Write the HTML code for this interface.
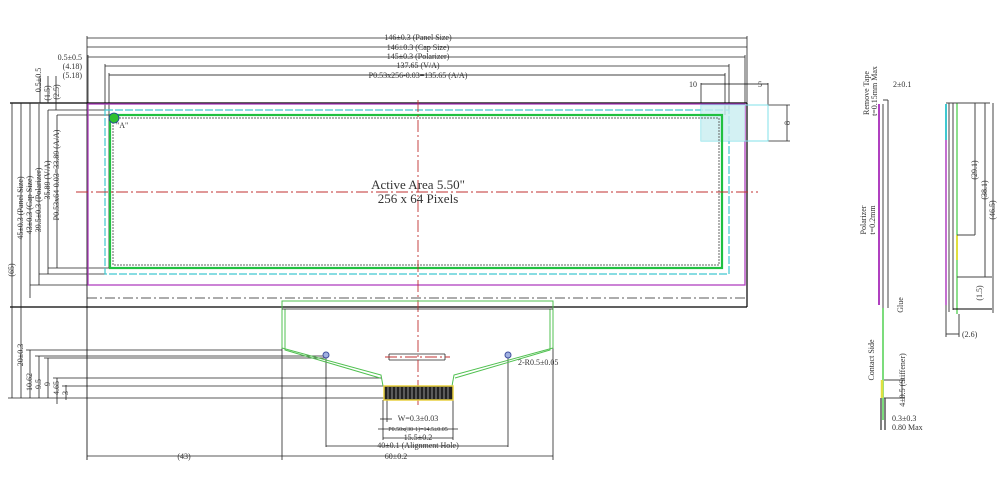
<!DOCTYPE html>
<html><head><meta charset="utf-8"><style>
html,body{margin:0;padding:0;background:#fff;}
svg{display:block;font-family:"Liberation Serif",serif;}
</style></head><body>
<svg width="1000" height="487" viewBox="0 0 1000 487" xmlns="http://www.w3.org/2000/svg">
<rect width="1000" height="487" fill="#fff"/>
<g stroke="#222" stroke-width="0.8" fill="none">
<!-- top dims -->
<line x1="87" y1="38" x2="747" y2="38"/>
<line x1="87" y1="47" x2="747" y2="47"/>
<line x1="88" y1="57" x2="745" y2="57"/>
<line x1="105" y1="66" x2="729" y2="66"/>
<line x1="109" y1="75" x2="725" y2="75" stroke="#000"/>
<line x1="87" y1="36" x2="87" y2="103"/>
<line x1="88" y1="55" x2="88" y2="103"/>
<line x1="105" y1="64" x2="105" y2="110"/>
<line x1="109" y1="73" x2="109" y2="268"/>
<line x1="747" y1="36" x2="747" y2="103"/>
<line x1="745" y1="55" x2="745" y2="103"/>
<line x1="729" y1="64" x2="729" y2="110"/>
<line x1="725" y1="73" x2="725" y2="115"/>
<line x1="701" y1="83" x2="701" y2="112"/>
<line x1="768" y1="83" x2="768" y2="110"/>
<line x1="701" y1="84" x2="768" y2="84" stroke="#000"/>
<line x1="768" y1="105" x2="790" y2="105"/>
<line x1="768" y1="141" x2="790" y2="141"/>
<line x1="787" y1="105" x2="787" y2="141"/>
<!-- panel -->
<line x1="10" y1="103" x2="747" y2="103" stroke="#000" stroke-width="1.2"/>
<line x1="10" y1="307" x2="747" y2="307" stroke="#000" stroke-width="1.2"/>
<line x1="87" y1="103" x2="87" y2="460" stroke="#000"/>
<line x1="747" y1="103" x2="747" y2="307" stroke="#000" stroke-width="1.2"/>
<line x1="87" y1="298" x2="747" y2="298" stroke-dasharray="10,3,2,3"/>
<!-- left dims -->
<line x1="12" y1="103" x2="12" y2="398"/>
<line x1="21" y1="103" x2="21" y2="307"/>
<line x1="30" y1="103" x2="30" y2="298"/>
<line x1="39" y1="104" x2="39" y2="285"/>
<line x1="48" y1="110" x2="48" y2="274"/>
<line x1="57" y1="115" x2="57" y2="268"/>
<line x1="30" y1="285" x2="88" y2="285"/>
<line x1="39" y1="274" x2="105" y2="274"/>
<line x1="48" y1="268" x2="109" y2="268"/>
<line x1="48" y1="110" x2="105" y2="110"/>
<line x1="57" y1="115" x2="110" y2="115"/>
<line x1="40" y1="76" x2="40" y2="103"/>
<line x1="48" y1="76" x2="48" y2="103"/>
<line x1="56" y1="76" x2="56" y2="110"/>
<line x1="21" y1="307" x2="21" y2="398"/>
<line x1="30" y1="350" x2="30" y2="398"/>
<line x1="39" y1="356" x2="39" y2="398"/>
<line x1="48" y1="358" x2="48" y2="398"/>
<line x1="57" y1="378" x2="57" y2="404"/>
<line x1="66" y1="385" x2="66" y2="400"/>
<line x1="8" y1="398" x2="384" y2="398"/>
<line x1="26" y1="350" x2="282" y2="350"/>
<line x1="35" y1="356" x2="326" y2="356"/>
<line x1="44" y1="358" x2="326" y2="358"/>
<line x1="53" y1="378" x2="382" y2="378"/>
<line x1="62" y1="386" x2="384" y2="386"/>
<!-- bottom dims -->
<line x1="282" y1="310" x2="282" y2="460"/>
<line x1="553" y1="310" x2="553" y2="460"/>
<line x1="87" y1="456" x2="553" y2="456"/>
<line x1="326" y1="358" x2="326" y2="447"/>
<line x1="508" y1="358" x2="508" y2="447"/>
<line x1="326" y1="446" x2="508" y2="446"/>
<line x1="383" y1="400" x2="383" y2="440"/>
<line x1="453" y1="400" x2="453" y2="440"/>
<line x1="383" y1="438" x2="453" y2="438"/>
<line x1="378" y1="429" x2="458" y2="429"/>
<line x1="380" y1="419" x2="392" y2="419"/>
<line x1="387" y1="400" x2="387" y2="422"/>
<line x1="389" y1="354" x2="445" y2="354"/>
<line x1="389" y1="360" x2="445" y2="360"/>
<line x1="389" y1="354" x2="389" y2="360"/>
<line x1="445" y1="354" x2="445" y2="360"/>
</g>
<!-- magenta -->
<rect x="88" y="104" width="657" height="181" fill="none" stroke="#b040c0" stroke-width="1.3"/>
<!-- cyan -->
<rect x="105" y="110" width="624" height="164" fill="none" stroke="#40c8d0" stroke-width="1.2" stroke-dasharray="8,2"/>
<rect x="701" y="105" width="67" height="36" fill="none" stroke="#80e0e8" stroke-width="1"/>
<rect x="701" y="105" width="44" height="36" fill="#c8eef0" opacity="0.8"/>
<!-- green -->
<rect x="110" y="115" width="612" height="153" fill="none" stroke="#20c040" stroke-width="2.2"/>
<rect x="113" y="118" width="606" height="147" fill="none" stroke="#666" stroke-width="1" stroke-dasharray="2,1"/>
<circle cx="114" cy="118" r="5" fill="#30c030" stroke="#2040a0" stroke-width="0.8"/>
<!-- red center -->
<g stroke="#c03030" stroke-width="0.9" stroke-dasharray="12,3,2,3">
<line x1="76" y1="192" x2="758" y2="192"/>
<line x1="418" y1="100" x2="418" y2="405"/>
<line x1="385" y1="357" x2="450" y2="357"/>
</g>
<!-- FPC -->
<g fill="none" stroke="#50c050" stroke-width="1">
<polyline points="282,309 282,301 553,301 553,309"/>
<polyline points="282,309 282,348 381,375 383,386"/>
<polyline points="553,309 553,348 454,375 452,386"/>
<polyline points="285,309 285,350 380,378"/>
<polyline points="550,309 550,350 455,378"/>
</g>
<line x1="282" y1="309" x2="553" y2="309" stroke="#222" stroke-width="0.8"/>
<rect x="384" y="386" width="69" height="14" fill="#222" stroke="#e8d040" stroke-width="1.5"/>
<g stroke="#ddd" stroke-width="0.6">
<line x1="388" y1="387" x2="388" y2="399"/><line x1="392" y1="387" x2="392" y2="399"/><line x1="396" y1="387" x2="396" y2="399"/><line x1="400" y1="387" x2="400" y2="399"/><line x1="404" y1="387" x2="404" y2="399"/><line x1="408" y1="387" x2="408" y2="399"/><line x1="412" y1="387" x2="412" y2="399"/><line x1="416" y1="387" x2="416" y2="399"/><line x1="420" y1="387" x2="420" y2="399"/><line x1="424" y1="387" x2="424" y2="399"/><line x1="428" y1="387" x2="428" y2="399"/><line x1="432" y1="387" x2="432" y2="399"/><line x1="436" y1="387" x2="436" y2="399"/><line x1="440" y1="387" x2="440" y2="399"/><line x1="444" y1="387" x2="444" y2="399"/><line x1="448" y1="387" x2="448" y2="399"/>
</g>
<circle cx="326" cy="355" r="3" fill="#a0b0e0" stroke="#4050a0"/>
<circle cx="508" cy="355" r="3" fill="#a0b0e0" stroke="#4050a0"/>
<!-- side view 1 -->
<g fill="none" stroke-width="1">
<line x1="879" y1="104" x2="879" y2="305" stroke="#b040c0" stroke-width="2"/>
<line x1="883" y1="104" x2="883" y2="308" stroke="#444"/>
<line x1="888" y1="100" x2="888" y2="308" stroke="#444"/>
<line x1="883" y1="100" x2="888" y2="100" stroke="#444"/>
<line x1="883" y1="308" x2="883" y2="420" stroke="#50d050" stroke-width="1.5"/>
<line x1="882" y1="380" x2="882" y2="398" stroke="#e0e040" stroke-width="2.5"/>
<line x1="881" y1="398" x2="881" y2="430" stroke="#000"/>
<line x1="885" y1="398" x2="885" y2="430" stroke="#000"/>
<line x1="884" y1="380" x2="905" y2="380" stroke="#444"/>
<line x1="884" y1="398" x2="905" y2="398" stroke="#444"/>
<line x1="902" y1="380" x2="902" y2="398" stroke="#444"/>
</g>
<!-- side view 2 -->
<g fill="none" stroke-width="1" stroke="#444">
<line x1="946" y1="104" x2="946" y2="140" stroke="#40c8d0" stroke-width="2"/>
<line x1="946" y1="140" x2="946" y2="305" stroke="#b040c0" stroke-width="1.5"/>
<line x1="949" y1="103" x2="949" y2="312"/>
<line x1="953" y1="103" x2="953" y2="310"/>
<line x1="957" y1="103" x2="957" y2="314" stroke="#50d050" stroke-width="1.3"/>
<line x1="957" y1="235" x2="957" y2="260" stroke="#e0e040" stroke-width="2"/>
<line x1="946" y1="103" x2="990" y2="103"/>
<line x1="957" y1="235" x2="975" y2="235"/>
<line x1="957" y1="277" x2="992" y2="277"/>
<line x1="953" y1="309" x2="992" y2="309" stroke="#000"/>
<line x1="975" y1="103" x2="975" y2="235"/>
<line x1="985" y1="103" x2="985" y2="277"/>
<line x1="993" y1="103" x2="993" y2="313"/>
<line x1="946" y1="305" x2="946" y2="337"/>
<line x1="959" y1="314" x2="959" y2="337"/>
<line x1="946" y1="334" x2="959" y2="334"/>
</g>
<!-- texts -->
<g font-size="8" fill="#333" text-anchor="middle">
<text x="418" y="40">146±0.3 (Panel Size)</text>
<text x="418" y="50">146±0.3 (Cap Size)</text>
<text x="418" y="59">145±0.3 (Polarizer)</text>
<text x="418" y="68">137.65 (V/A)</text>
<text x="418" y="78">P0.53x256-0.03=135.65 (A/A)</text>
</g>
<g font-size="8" fill="#333" text-anchor="end">
<text x="82" y="60">0.5±0.5</text>
<text x="82" y="69">(4.18)</text>
<text x="82" y="78">(5.18)</text>
<text x="697" y="87">10</text>
</g>
<text x="758" y="87" font-size="8" fill="#333">5</text>
<text x="116" y="128" font-size="8" fill="#333">"A"</text>
<text x="418" y="189" font-size="13" fill="#333" text-anchor="middle">Active Area 5.50"</text>
<text x="418" y="203" font-size="13" fill="#333" text-anchor="middle">256 x 64 Pixels</text>
<g font-size="8" fill="#333" text-anchor="middle">
<text transform="translate(14,270) rotate(-90)">(65)</text>
<text transform="translate(23,208) rotate(-90)">45±0.3 (Panel Size)</text>
<text transform="translate(32,205) rotate(-90)">43±0.3 (Cap Size)</text>
<text transform="translate(41,200) rotate(-90)">39.5±0.3 (Polarizer)</text>
<text transform="translate(50,180) rotate(-90)">35.89 (V/A)</text>
<text transform="translate(59,175) rotate(-90)">P0.53x64-0.03=33.89 (A/A)</text>
<text transform="translate(41,80) rotate(-90)">0.5±0.5</text>
<text transform="translate(50,93) rotate(-90)">(1.5)</text>
<text transform="translate(59,92) rotate(-90)">(2.5)</text>
<text transform="translate(23,355) rotate(-90)">20±0.3</text>
<text transform="translate(32,382) rotate(-90)">10.62</text>
<text transform="translate(41,384) rotate(-90)">9.5</text>
<text transform="translate(50,384) rotate(-90)">9</text>
<text transform="translate(59,388) rotate(-90)">4.65</text>
<text transform="translate(68,393) rotate(-90)">3</text>
<text transform="translate(790,123) rotate(-90)">8</text>
<text x="184" y="459">(43)</text>
<text x="396" y="459">60±0.2</text>
<text x="418" y="448">40±0.1 (Alignment Hole)</text>
<text x="418" y="440">15.5±0.2</text>
<text x="418" y="421">W=0.3±0.03</text>
<text x="418" y="431" font-size="6">P0.50x(30-1)=14.5±0.05</text>
<text transform="translate(869,93) rotate(-90)">Remove Tape</text>
<text transform="translate(877,91) rotate(-90)">t=0.15mm Max</text>
<text transform="translate(866,220) rotate(-90)">Polarizer</text>
<text transform="translate(875,220) rotate(-90)">t=0.2mm</text>
<text transform="translate(903,305) rotate(-90)">Glue</text>
<text transform="translate(874,360) rotate(-90)">Contact Side</text>
<text transform="translate(905,380) rotate(-90)">4±0.5 (Stiffener)</text>
<text transform="translate(977,170) rotate(-90)">(29.1)</text>
<text transform="translate(987,190) rotate(-90)">(38.1)</text>
<text transform="translate(995,210) rotate(-90)">(46.5)</text>
<text transform="translate(982,293) rotate(-90)">(1.5)</text>
</g>
<g font-size="8" fill="#333">
<text x="518" y="365">2-R0.5±0.05</text>
<text x="893" y="87">2±0.1</text>
<text x="892" y="421">0.3±0.3</text>
<text x="892" y="430">0.80 Max</text>
<text x="962" y="337">(2.6)</text>
</g>
</svg>
</body></html>
